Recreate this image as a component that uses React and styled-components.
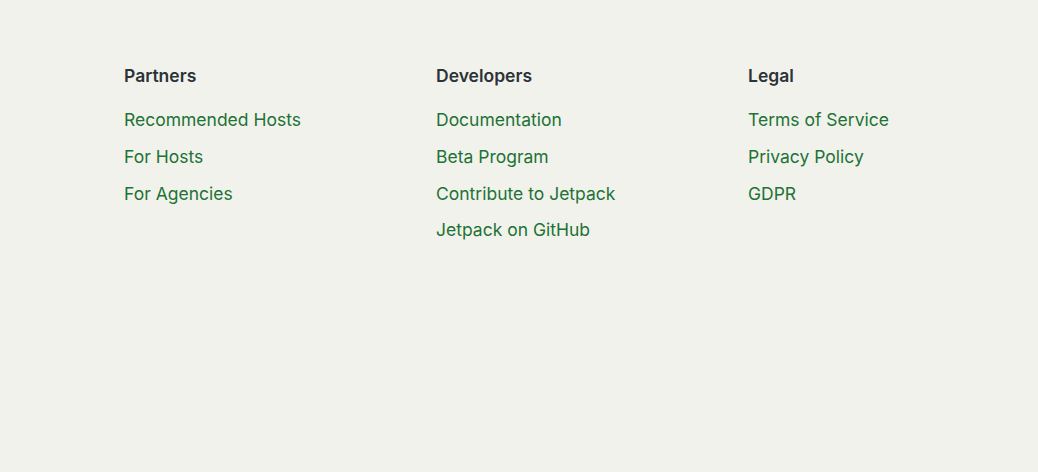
import React from 'react';
import styled, { createGlobalStyle } from 'styled-components';

const GlobalStyle = createGlobalStyle`
  html, body {
    margin: 0;
    padding: 0;
    background: #f2f2ed;
  }
  body {
    font-family: Inter, "Noto Sans", sans-serif;
  }
`;

const columns = [
  { title: 'Partners', links: ['Recommended Hosts', 'For Hosts', 'For Agencies'] },
  {
    title: 'Developers',
    links: ['Documentation', 'Beta Program', 'Contribute to Jetpack', 'Jetpack on GitHub'],
  },
  { title: 'Legal', links: ['Terms of Service', 'Privacy Policy', 'GDPR'] },
];

const App = () => (
  <>
    <GlobalStyle />
    <StyledFooter>
      {columns.map((col) => (
        <StyledColumn key={col.title}>
          <StyledTitle>{col.title}</StyledTitle>
          <StyledList>
            {col.links.map((link) => (
              <li key={link}>
                <StyledLink href="#">{link}</StyledLink>
              </li>
            ))}
          </StyledList>
        </StyledColumn>
      ))}
    </StyledFooter>
  </>
);

const StyledFooter = styled.footer`
  width: 1038px;
  height: 472px;
  box-sizing: border-box;
  padding: 64px 0 0 124px;
  display: grid;
  grid-template-columns: repeat(3, 312px);
  align-items: start;
`;

const StyledColumn = styled.section`
  display: flex;
  flex-direction: column;
`;

const StyledTitle = styled.h3`
  margin: 0;
  font-size: 17.5px;
  line-height: 24px;
  font-weight: 600;
  color: #2c3338;
`;

const StyledList = styled.ul`
  list-style: none;
  margin: 20px 0 0;
  padding: 0;
  display: flex;
  flex-direction: column;
  gap: 12.8px;
`;

const StyledLink = styled.a`
  display: block;
  font-size: 17.5px;
  line-height: 24px;
  color: #217234;
  text-decoration: none;
`;

export default App;
